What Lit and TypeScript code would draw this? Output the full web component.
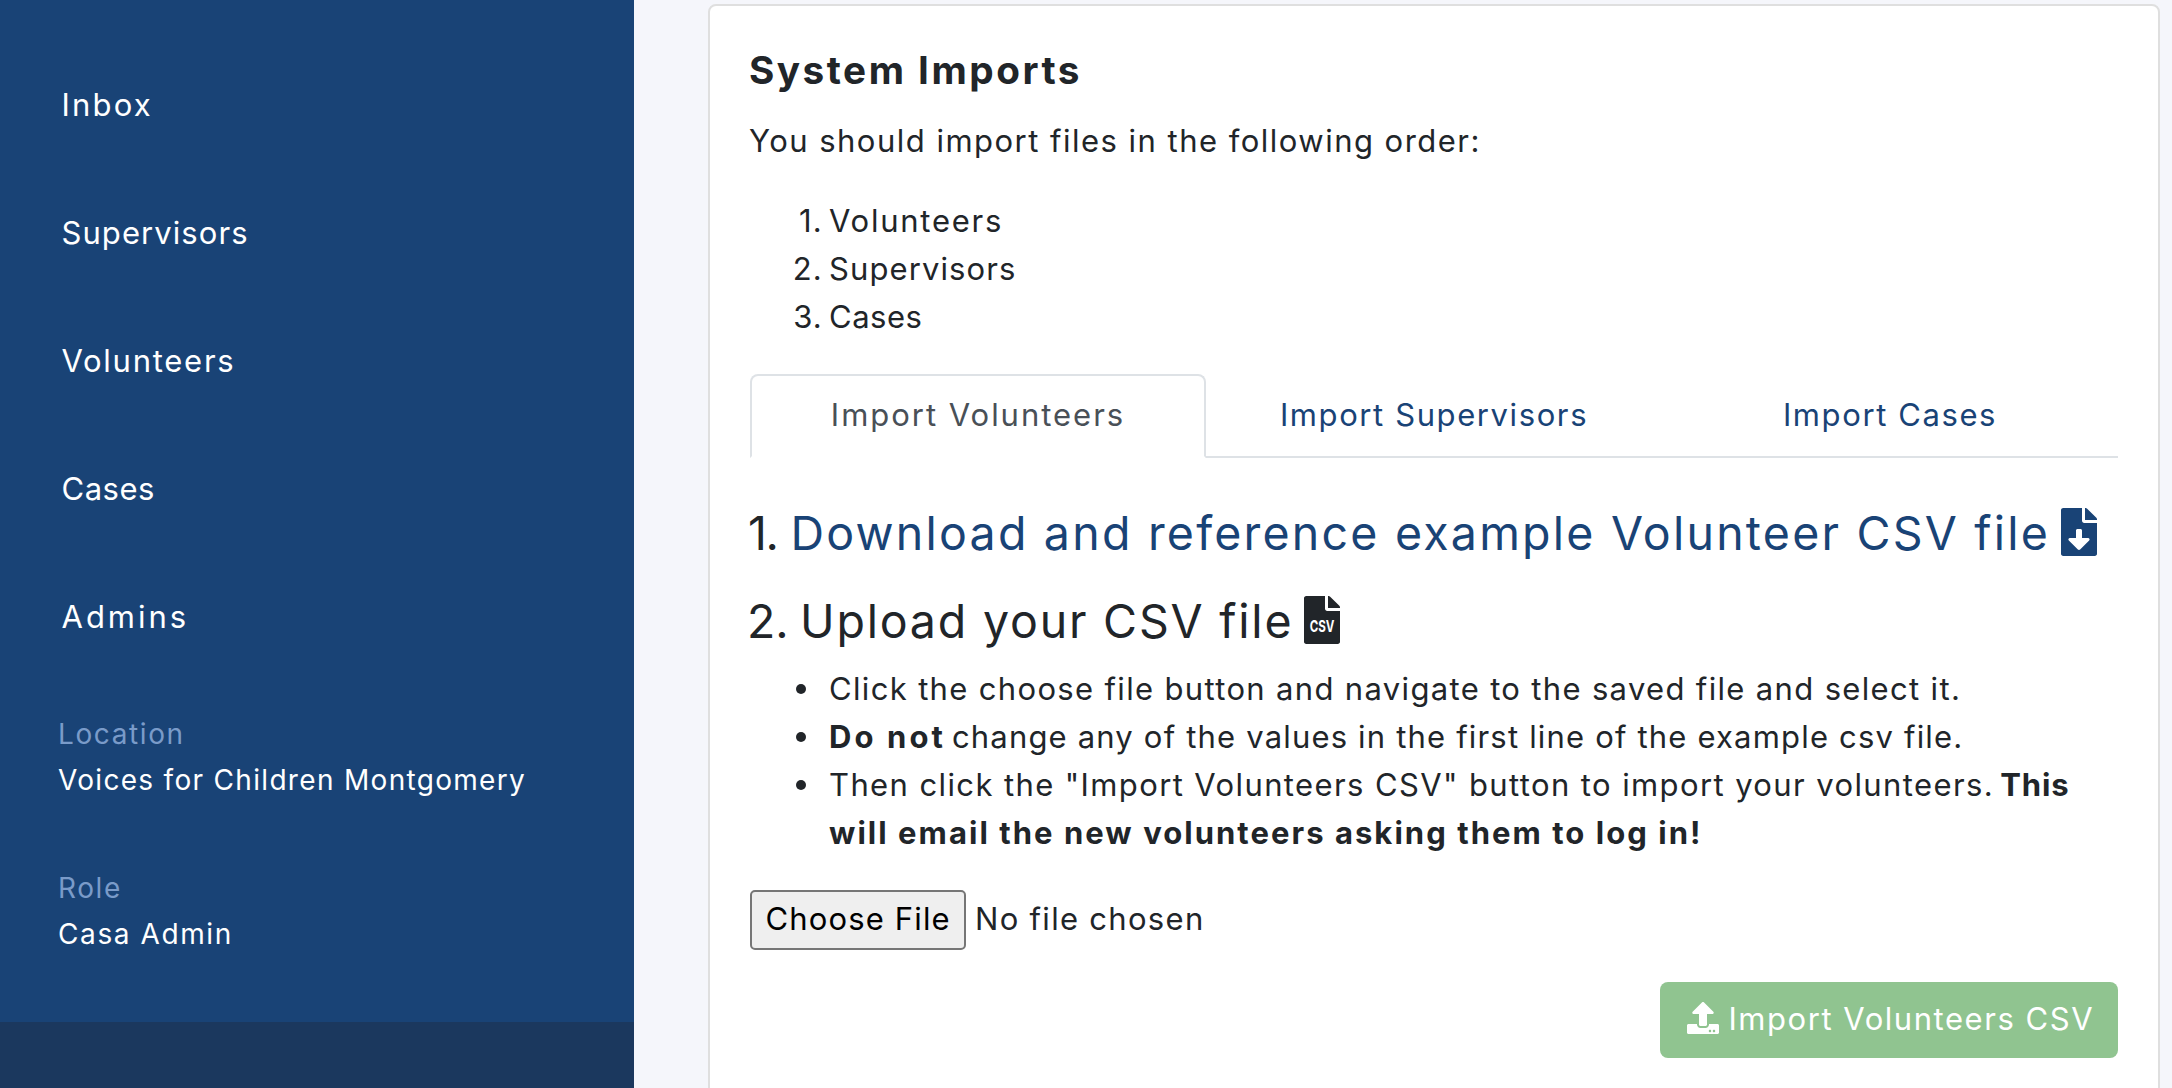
import { LitElement, html, svg, css } from 'lit';
import { customElement, property } from 'lit/decorators.js';

const ICONS = {
  download: {
    box: '0 0 384 512',
    body: svg`<path d="M224 136V0H24C10.7 0 0 10.7 0 24v464c0 13.3 10.7 24 24 24h336c13.3 0 24-10.7 24-24V160H248c-13.2 0-24-10.8-24-24zm76.45 211.36l-96.42 95.7c-6.65 6.61-17.39 6.61-24.04 0l-96.42-95.7C73.42 337.29 80.54 320 94.82 320H160v-80c0-8.84 7.16-16 16-16h32c8.84 0 16 7.16 16 16v80h65.18c14.28 0 21.4 17.29 11.27 27.36zM377 105L279.1 7c-4.5-4.5-10.6-7-17-7H256v128h128v-6.1c0-6.3-2.5-12.4-7-16.9z"/>`,
  },
  csv: {
    box: '0 0 384 512',
    body: svg`<path d="M224 136V0H24C10.7 0 0 10.7 0 24v464c0 13.3 10.7 24 24 24h336c13.3 0 24-10.7 24-24V160H248c-13.2 0-24-10.8-24-24zM377 105L279.1 7c-4.5-4.5-10.6-7-17-7H256v128h128v-6.1c0-6.3-2.5-12.4-7-16.9z"/><text x="60" y="384" font-size="172" font-weight="700" letter-spacing="0" textLength="264" lengthAdjust="spacingAndGlyphs" fill="#fff" font-family="Inter, sans-serif">CSV</text>`,
  },
  upload: {
    box: '0 0 512 512',
    body: svg`<path d="M296 384h-80c-13.3 0-24-10.7-24-24V192h-87.7c-17.8 0-26.7-21.5-14.1-34.1L242.3 5.7c7.5-7.5 19.8-7.5 27.3 0l152.2 152.2c12.6 12.6 3.7 34.1-14.1 34.1H320v168c0 13.3-10.7 24-24 24zm216-8v112c0 13.3-10.7 24-24 24H24c-13.3 0-24-10.7-24-24V376c0-13.3 10.7-24 24-24h136v8c0 30.9 25.1 56 56 56h80c30.9 0 56-25.1 56-56v-8h136c13.3 0 24 10.7 24 24zm-124 88c0-11-9-20-20-20s-20 9-20 20 9 20 20 20 20-9 20-20zm64 0c0-11-9-20-20-20s-20 9-20 20 9 20 20 20 20-9 20-20z"/>`,
  },
};

@customElement('app-icon')
export class AppIcon extends LitElement {
  static styles = css`
    :host { display: block; flex: none; }
    svg { display: block; width: 100%; height: 100%; fill: currentColor; overflow: visible; }
  `;
  @property() name: keyof typeof ICONS = 'csv';
  render() {
    const icon = ICONS[this.name];
    return html`<svg viewBox=${icon.box} aria-hidden="true">${icon.body}</svg>`;
  }
}

@customElement('app-sidebar')
export class AppSidebar extends LitElement {
  static styles = css`
    :host {
      display: flex; flex-direction: column; flex: none; box-sizing: border-box;
      width: 634px; height: 1088px; background: #194376; color: #fff;
    }
    .nav { display: flex; flex-direction: column; padding: 41px 0 0 61.5px; }
    .item { padding: 40px 0; font-size: 31px; line-height: 48px; }
    .inbox { letter-spacing: 2.2px; }
    .supervisors { letter-spacing: 1.07px; }
    .volunteers { letter-spacing: 1.73px; }
    .cases { letter-spacing: 0.5px; }
    .admins { letter-spacing: 3px; }
    .meta { display: flex; flex-direction: column; gap: 62px; padding: 30px 0 0 58px; }
    .entry { font-size: 28px; line-height: 46px; }
    .label { color: #7a9bc9; letter-spacing: 1.6px; }
    .place { letter-spacing: 1.31px; }
    .role { letter-spacing: 1.6px; }
    .footer { margin-top: auto; height: 66px; background: #1b385e; }
  `;
  render() {
    return html`
      <nav class="nav">
        ${['Inbox', 'Supervisors', 'Volunteers', 'Cases', 'Admins'].map(
          (t) => html`<div class="item ${t.toLowerCase()}">${t}</div>`,
        )}
      </nav>
      <div class="meta">
        <div class="entry">
          <div class="label">Location</div>
          <div class="place">Voices for Children Montgomery</div>
        </div>
        <div class="entry">
          <div class="label">Role</div>
          <div class="role">Casa Admin</div>
        </div>
      </div>
      <div class="footer"></div>
    `;
  }
}

@customElement('app-root')
export class AppRoot extends LitElement {
  static styles = css`
    :host {
      display: flex; height: 1088px; overflow: hidden; background: #f5f6fb;
      font-family: Inter, 'Open Sans', 'Liberation Sans', sans-serif;
      font-size: 31px; line-height: 48px; color: #212529; white-space: nowrap;
    }
    .card {
      box-sizing: border-box; width: 1452px; height: 1120px; margin: 4px 0 0 74px;
      padding: 40px; background: #fff; border: 2px solid #dfdfdf; border-radius: 8px;
    }
    h1, h2, p, ol, ul { margin: 0; padding: 0; list-style: none; }
    h1 { margin-left: -1px; font-size: 38.7px; line-height: 48px; font-weight: 700; letter-spacing: 2.5px; }
    .intro { margin: 23px 0 0 -1px; letter-spacing: 1.48px; }
    .order { margin-top: 32px; }
    .order li { display: flex; gap: 6px; }
    .num { width: 73px; text-align: right; letter-spacing: 1.2px; }
    .volunteers { letter-spacing: 1.75px; }
    .supervisors { letter-spacing: 1.1px; }
    .cases { letter-spacing: 0.5px; }

    .tabs { display: flex; margin-top: 33px; height: 84px; color: #194376; }
    .tab {
      flex: 0 0 456px; box-sizing: border-box; padding-top: 17px; text-align: center;
      border-bottom: 2px solid #dee2e6; letter-spacing: 1.6px;
    }
    .tab.active {
      padding-top: 15px; color: #495057; letter-spacing: 1.98px;
      border: 2px solid #dee2e6; border-bottom-color: #fff; border-radius: 8px 8px 0 0;
    }

    h2 { display: flex; font-size: 46.5px; line-height: 58px; font-weight: 400; }
    .step1 { margin: 46px 0 0 -2px; }
    .step2 { margin: 30px 0 0 -3px; }
    .step1 .n { width: 42.5px; letter-spacing: -1.5px; }
    .step2 .n { width: 53px; }
    .link { display: flex; color: #194376; letter-spacing: 2.22px; }
    .upload { letter-spacing: 1.8px; }
    .file { width: 36px; height: 48px; margin: 4px 0 0 11px; }

    .hints { margin-top: 15px; }
    .hints li { display: flex; }
    .dot {
      flex: none; width: 10px; height: 10px; margin: 19px 23px 0 46px;
      border-radius: 50%; background: currentColor;
    }
    .a { letter-spacing: 1.34px; }
    .b { letter-spacing: 1.18px; }
    .b b { margin-right: -4px; letter-spacing: 3.1px; }
    .c { letter-spacing: 1.39px; }
    .c b { margin-left: -4px; letter-spacing: 0.9px; }
    .c .last { margin-left: 0; letter-spacing: 2.04px; }

    .picker { display: flex; align-items: center; margin-top: 33px; height: 60px; }
    .choose {
      box-sizing: border-box; width: 216px; height: 60px; padding: 3px 0 0 13.5px;
      border: 2px solid #767676; border-radius: 5px; background: #efefef; color: #000;
      letter-spacing: 1.15px;
    }
    .none { margin-left: 9px; padding-bottom: 2px; letter-spacing: 1.3px; }

    .actions { display: flex; justify-content: flex-end; margin-top: 32px; }
    .submit {
      display: flex; box-sizing: border-box; width: 458px; height: 76px;
      padding: 13px 0 0 27px; border-radius: 8px; background: #90c490; color: #fff;
      letter-spacing: 1.54px;
    }
    .submit app-icon { width: 32px; height: 32px; margin: 7px 9.5px 0 0; }
  `;

  render() {
    return html`
      <app-sidebar></app-sidebar>
      <main class="card">
        <h1>System Imports</h1>
        <p class="intro">You should import files in the following order:</p>
        <ol class="order">
          ${['Volunteers', 'Supervisors', 'Cases'].map(
            (t, i) => html`<li><span class="num">${i + 1}.</span><span class=${t.toLowerCase()}>${t}</span></li>`,
          )}
        </ol>
        <div class="tabs">
          <div class="tab active">Import Volunteers</div>
          <div class="tab">Import Supervisors</div>
          <div class="tab">Import Cases</div>
        </div>
        <h2 class="step1">
          <span class="n">1.</span>
          <span class="link">Download and reference example Volunteer CSV file<app-icon class="file" name="download"></app-icon></span>
        </h2>
        <h2 class="step2">
          <span class="n">2.</span>
          <span class="upload">Upload your CSV file</span>
          <app-icon class="file" name="csv"></app-icon>
        </h2>
        <ul class="hints">
          <li><i class="dot"></i><span class="a">Click the choose file button and navigate to the saved file and select it.</span></li>
          <li><i class="dot"></i><span class="b"><b>Do not</b> change any of the values in the first line of the example csv file.</span></li>
          <li><i class="dot"></i><span class="c">Then click the "Import Volunteers CSV" button to import your volunteers. <b>This</b><br /><b class="last">will email the new volunteers asking them to log in!</b></span></li>
        </ul>
        <div class="picker">
          <div class="choose">Choose File</div>
          <span class="none">No file chosen</span>
        </div>
        <div class="actions">
          <div class="submit"><app-icon name="upload"></app-icon>Import Volunteers CSV</div>
        </div>
      </main>
    `;
  }
}
